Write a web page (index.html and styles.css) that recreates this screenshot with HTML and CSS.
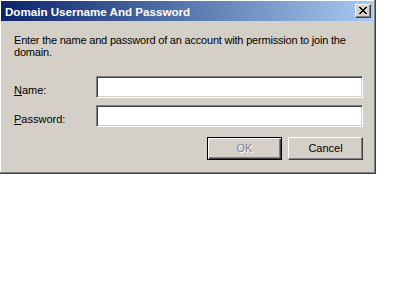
FILE: index.html
```html
<!DOCTYPE html>
<html>
<head>
<meta charset="utf-8">
<link rel="stylesheet" href="styles.css">
</head>
<body>
<div class="window">
  <div class="titlebar">
    <span class="title">Domain Username And Password</span>
    <div class="close">
      <svg width="8" height="7" viewBox="0 0 8 7" shape-rendering="crispEdges"><path fill="#000" d="M0 0h2v1H0z M6 0h2v1H6z M1 1h2v1H1z M5 1h2v1H5z M2 2h4v1H2z M3 3h2v1H3z M2 4h4v1H2z M1 5h2v1H1z M5 5h2v1H5z M0 6h2v1H0z M6 6h2v1H6z"/></svg>
    </div>
  </div>
  <div class="content">
    <p class="desc">Enter the name and password of an account with permission to join the<br>domain.</p>
    <div class="form">
      <label class="label"><u>N</u>ame:</label>
      <div class="input"></div>
      <label class="label"><u>P</u>assword:</label>
      <div class="input"></div>
    </div>
    <div class="buttons">
      <div class="btn default disabled">OK</div>
      <div class="btn">Cancel</div>
    </div>
  </div>
</div>
</body>
</html>
```
FILE: styles.css
```css
html, body {
  margin: 0;
  padding: 0;
  background: #ffffff;
}
body {
  font-family: "Liberation Sans", Arial, sans-serif;
  font-size: 11px;
  color: #000;
}
.window {
  width: 376px;
  height: 174px;
  box-sizing: border-box;
  background: #d4d0c8;
  border-right: 1px solid #404040;
  border-bottom: 1px solid #404040;
  box-shadow: inset -1px -1px #808080, inset 1px 1px #ffffff;
  padding: 1px 2px 0 1px;
}
.titlebar {
  height: 20px;
  display: flex;
  align-items: center;
  justify-content: space-between;
  padding: 0 2px 0 4px;
  background: linear-gradient(to right, #0a246a, #a6caf0);
}
.title {
  color: #fff;
  font-weight: bold;
  font-size: 11.6px;
  white-space: nowrap;
}
.close {
  width: 16px;
  height: 14px;
  box-sizing: border-box;
  background: #d4d0c8;
  border: 1px solid;
  border-color: #ffffff #404040 #404040 #ffffff;
  box-shadow: inset -1px -1px #808080;
  display: flex;
  align-items: center;
  justify-content: center;
}
.close svg {
  display: block;
  margin: 0 1px 1px 0;
}
.content {
  padding: 13px 10px 0 13px;
}
.desc {
  margin: 0;
  font-size: 11px;
  letter-spacing: -0.2px;
  line-height: 12px;
  white-space: nowrap;
}
.form {
  margin-top: 18px;
  display: grid;
  grid-template-columns: 82px 267px;
  row-gap: 7px;
}
.label {
  padding-top: 8px;
  line-height: 12px;
}
.input {
  height: 22px;
  box-sizing: border-box;
  background: #fff;
  border: 1px solid;
  border-color: #808080 #ffffff #ffffff #808080;
  box-shadow: inset 1px 1px #404040, inset -1px -1px #d4d0c8;
}
.buttons {
  margin-top: 10px;
  width: 349px;
  display: flex;
  justify-content: flex-end;
  gap: 6px;
}
.btn {
  width: 75px;
  height: 23px;
  box-sizing: border-box;
  border: 1px solid;
  border-color: #ffffff #404040 #404040 #ffffff;
  box-shadow: inset -1px -1px #808080;
  display: flex;
  align-items: center;
  justify-content: center;
  padding-bottom: 1px;
}
.btn.default {
  border: 1px solid #000;
  box-shadow: inset 1px 1px #ffffff, inset -1px -1px #404040, inset -2px -2px #808080;
}
.btn.disabled {
  color: #808080;
  text-shadow: 1px 1px #ffffff;
}
```
